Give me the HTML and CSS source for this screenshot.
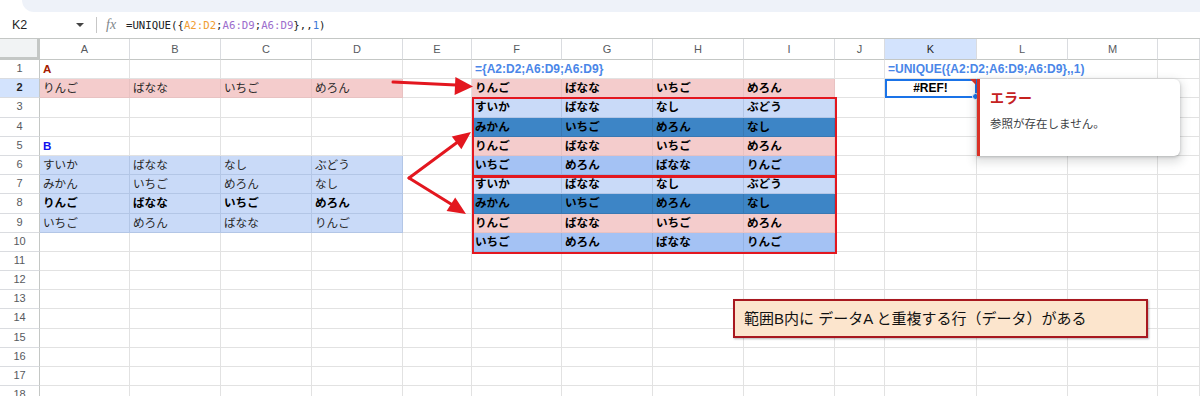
FILE: index.html
```html
<!DOCTYPE html>
<html lang="ja">
<head>
<meta charset="utf-8">
<title>UNIQUE #REF!</title>
<link rel="stylesheet" href="styles.css">
</head>
<body>
<div class="app">
  <div class="topedge"></div>
  <div class="fbar">
    <div class="namebox"><span>K2</span><span class="caret"></span></div>
    <div class="sep"></div>
    <div class="fx">fx</div>
    <div class="formula">=UNIQUE({<span class="o">A2:D2</span>;<span class="p">A6:D9</span>;<span class="p">A6:D9</span>},,<span class="n">1</span>)</div>
  </div>

  <div class="sheet">
    <div class="row hdr">
      <div class="corner"></div><div>A</div><div>B</div><div>C</div><div>D</div><div>E</div><div>F</div><div>G</div><div>H</div><div>I</div><div>J</div><div class="on">K</div><div>L</div><div>M</div><div></div>
    </div>
    <div class="row">
      <div class="rh">1</div><div class="lbl-a">A</div><div></div><div></div><div></div><div></div><div class="fm nr">={A2:D2;A6:D9;A6:D9}</div><div></div><div></div><div></div><div></div><div class="fm nr">=UNIQUE({A2:D2;A6:D9;A6:D9},,1)</div><div class="nr"></div><div></div><div></div>
    </div>
    <div class="row">
      <div class="rh on">2</div><div class="pk">りんご</div><div class="pk">ばなな</div><div class="pk">いちご</div><div class="pk">めろん</div><div></div><div class="pk b">りんご</div><div class="pk b">ばなな</div><div class="pk b">いちご</div><div class="pk b">めろん</div><div></div><div class="sel">#REF!</div><div></div><div></div><div></div>
    </div>
    <div class="row">
      <div class="rh">3</div><div></div><div></div><div></div><div></div><div></div><div class="lb b">すいか</div><div class="lb b">ばなな</div><div class="lb b">なし</div><div class="lb b">ぶどう</div><div></div><div></div><div></div><div></div><div></div>
    </div>
    <div class="row">
      <div class="rh">4</div><div></div><div></div><div></div><div></div><div></div><div class="db b">みかん</div><div class="db b">いちご</div><div class="db b">めろん</div><div class="db b">なし</div><div></div><div></div><div></div><div></div><div></div>
    </div>
    <div class="row">
      <div class="rh">5</div><div class="lbl-b">B</div><div></div><div></div><div></div><div></div><div class="pk b">りんご</div><div class="pk b">ばなな</div><div class="pk b">いちご</div><div class="pk b">めろん</div><div></div><div></div><div></div><div></div><div></div>
    </div>
    <div class="row">
      <div class="rh">6</div><div class="lb">すいか</div><div class="lb">ばなな</div><div class="lb">なし</div><div class="lb">ぶどう</div><div></div><div class="mb b">いちご</div><div class="mb b">めろん</div><div class="mb b">ばなな</div><div class="mb b">りんご</div><div></div><div></div><div></div><div></div><div></div>
    </div>
    <div class="row">
      <div class="rh">7</div><div class="lb">みかん</div><div class="lb">いちご</div><div class="lb">めろん</div><div class="lb">なし</div><div></div><div class="lb b">すいか</div><div class="lb b">ばなな</div><div class="lb b">なし</div><div class="lb b">ぶどう</div><div></div><div></div><div></div><div></div><div></div>
    </div>
    <div class="row">
      <div class="rh">8</div><div class="lb b">りんご</div><div class="lb b">ばなな</div><div class="lb b">いちご</div><div class="lb b">めろん</div><div></div><div class="db b">みかん</div><div class="db b">いちご</div><div class="db b">めろん</div><div class="db b">なし</div><div></div><div></div><div></div><div></div><div></div>
    </div>
    <div class="row">
      <div class="rh">9</div><div class="lb">いちご</div><div class="lb">めろん</div><div class="lb">ばなな</div><div class="lb">りんご</div><div></div><div class="pk b">りんご</div><div class="pk b">ばなな</div><div class="pk b">いちご</div><div class="pk b">めろん</div><div></div><div></div><div></div><div></div><div></div>
    </div>
    <div class="row">
      <div class="rh">10</div><div></div><div></div><div></div><div></div><div></div><div class="mb b">いちご</div><div class="mb b">めろん</div><div class="mb b">ばなな</div><div class="mb b">りんご</div><div></div><div></div><div></div><div></div><div></div>
    </div>
    <div class="row"><div class="rh">11</div><div></div><div></div><div></div><div></div><div></div><div></div><div></div><div></div><div></div><div></div><div></div><div></div><div></div><div></div></div>
    <div class="row"><div class="rh">12</div><div></div><div></div><div></div><div></div><div></div><div></div><div></div><div></div><div></div><div></div><div></div><div></div><div></div><div></div></div>
    <div class="row"><div class="rh">13</div><div></div><div></div><div></div><div></div><div></div><div></div><div></div><div></div><div></div><div></div><div></div><div></div><div></div><div></div></div>
    <div class="row"><div class="rh">14</div><div></div><div></div><div></div><div></div><div></div><div></div><div></div><div></div><div></div><div></div><div></div><div></div><div></div><div></div></div>
    <div class="row"><div class="rh">15</div><div></div><div></div><div></div><div></div><div></div><div></div><div></div><div></div><div></div><div></div><div></div><div></div><div></div><div></div></div>
    <div class="row"><div class="rh">16</div><div></div><div></div><div></div><div></div><div></div><div></div><div></div><div></div><div></div><div></div><div></div><div></div><div></div><div></div></div>
    <div class="row"><div class="rh">17</div><div></div><div></div><div></div><div></div><div></div><div></div><div></div><div></div><div></div><div></div><div></div><div></div><div></div><div></div></div>
    <div class="row"><div class="rh">18</div><div></div><div></div><div></div><div></div><div></div><div></div><div></div><div></div><div></div><div></div><div></div><div></div><div></div><div></div></div>
  </div>

  <div class="rbox rb1"></div>
  <div class="rbox rb2"></div>

  <svg class="arrows" width="1200" height="396" viewBox="0 0 1200 396">
    <g stroke="#e3171f" stroke-width="3" fill="none" stroke-linecap="round">
      <line x1="393" y1="82" x2="456" y2="85"/>
      <line x1="409" y1="178" x2="457" y2="142.5"/>
      <line x1="409" y1="178" x2="451" y2="204"/>
    </g>
    <g fill="#e3171f">
      <polygon points="473,86.5 455.4,77 454.6,95"/>
      <polygon points="471,132 461.4,149.2 451.8,136.4"/>
      <polygon points="466,214 446.6,211 455.2,197.6"/>
    </g>
  </svg>

  <div class="tip">
    <div class="tip-title">エラー</div>
    <div class="tip-msg">参照が存在しません。</div>
  </div>

  <div class="note">範囲B内に データA と重複する行（データ）がある</div>
</div>
</body>
</html>
```

FILE: styles.css
```css
html, body {
  margin: 0;
  padding: 0;
  background: #fff;
}

.app {
  position: relative;
  width: 1200px;
  height: 396px;
  overflow: hidden;
  background: #fff;
  font-family: "Liberation Sans", "Noto Sans CJK JP", sans-serif;
}

.topedge {
  height: 12px;
  margin-left: 22px;
  background: #eef2f9;
  border-bottom-left-radius: 12px;
}

/* formula bar */
.fbar {
  height: 26px;
  display: flex;
  align-items: center;
}

.namebox {
  width: 96px;
  box-sizing: border-box;
  padding: 0 12px 0 12px;
  display: flex;
  align-items: center;
  justify-content: space-between;
  font-size: 12.5px;
  color: #1f1f1f;
}

.caret {
  width: 0;
  height: 0;
  border-left: 4px solid transparent;
  border-right: 4px solid transparent;
  border-top: 4px solid #444;
}

.sep {
  width: 1px;
  height: 16px;
  background: #c7c7c7;
}

.fx {
  width: 20px;
  margin-left: 9px;
  font-family: "Liberation Serif", serif;
  font-style: italic;
  font-size: 14px;
  color: #80868b;
}

.formula {
  font-family: "DejaVu Sans Mono", monospace;
  font-size: 10.7px;
  color: #202124;
  white-space: nowrap;
}

.formula .o { color: #f09d32; }
.formula .p { color: #9b6dcc; }
.formula .n { color: #3c78d8; }

/* sheet grid */
.row {
  display: grid;
  grid-template-columns: 40px 90px 91px 91px 91px 69px 90px 91px 91px 91px 50px 92px 91px 90px 1fr;
  height: 19.2px;
}

.row > div {
  box-sizing: border-box;
  border-right: 1px solid #e2e2e2;
  border-bottom: 1px solid #e2e2e2;
  padding: 0 3px;
  font-size: 11.6px;
  line-height: 18px;
  white-space: nowrap;
  color: #262626;
}

.row.hdr {
  height: 22px;
  border-top: 1px solid #c4c7c5;
  box-sizing: border-box;
}

.row.hdr > div {
  text-align: center;
  font-size: 11px;
  line-height: 20px;
  color: #575a5e;
  border-bottom: 1px solid #c4c7c5;
  border-right-color: #dadce0;
}

.row.hdr > .corner {
  background: #f1f3f4;
  border-right: 3px solid #c4c7c5;
  border-bottom: 3px solid #c4c7c5;
}

.row.hdr > .on {
  background: #d3e3fd;
  color: #1f1f1f;
}

.row > .rh {
  padding: 0;
  text-align: center;
  font-size: 11px;
  line-height: 17px;
  color: #575a5e;
  border-right: 1px solid #c4c7c5;
  border-bottom-color: #dadce0;
}

.row > .rh.on {
  background: #d3e3fd;
  font-weight: bold;
  color: #1f1f1f;
}

.row > .nr {
  border-right-color: transparent;
}

.row > .lbl-a {
  color: #a61c00;
  font-weight: bold;
  font-family: "Liberation Sans", sans-serif;
}

.row > .lbl-b {
  color: #1010ee;
  font-weight: bold;
  font-family: "Liberation Sans", sans-serif;
}

.row > .fm {
  color: #4a86e8;
  font-weight: bold;
  font-size: 12px;
  font-family: "Liberation Sans", sans-serif;
}

.row > .pk {
  background: #f4cccc;
  border-color: #e8c2c2;
}

.row > .lb {
  background: #c9daf8;
  border-color: #b3c6e6;
}

.row > .db {
  background: #3d85c6;
  border-color: #3878b3;
}

.row > .mb {
  background: #a4c2f4;
  border-color: #95b3e3;
}

.row > .b {
  font-weight: bold;
  color: #000;
}

.row > .sel {
  position: relative;
  text-align: center;
  font-weight: bold;
  color: #000;
  font-size: 12px;
  outline: 2px solid #1a73e8;
  outline-offset: -2px;
}

.row > .sel::before {
  content: "";
  position: absolute;
  top: 0;
  right: 0;
  border-top: 6px solid #d93025;
  border-left: 6px solid transparent;
}

.row > .sel::after {
  content: "";
  position: absolute;
  right: -3px;
  bottom: -3px;
  width: 5px;
  height: 5px;
  border-radius: 50%;
  background: #1a73e8;
  border: 1px solid #fff;
}

/* overlays */
.rbox {
  position: absolute;
  left: 472px;
  width: 365px;
  box-sizing: border-box;
  border: 2px solid #e3171f;
}

.rb1 {
  top: 97px;
  height: 80px;
}

.rb2 {
  top: 176px;
  height: 78px;
}

.arrows {
  position: absolute;
  left: 0;
  top: 0;
  pointer-events: none;
}

.tip {
  position: absolute;
  left: 977px;
  top: 79px;
  width: 203px;
  height: 77px;
  box-sizing: border-box;
  background: #fff;
  border-left: 3px solid #d93025;
  border-radius: 0 6px 6px 0;
  box-shadow: 0 1px 3px rgba(60, 64, 67, 0.3), 0 4px 8px 3px rgba(60, 64, 67, 0.15);
  padding: 10px 10px 0 10px;
}

.tip-title {
  font-size: 14px;
  line-height: 18px;
  font-weight: bold;
  color: #c5221f;
}

.tip-msg {
  margin-top: 9px;
  font-size: 11.5px;
  line-height: 16px;
  color: #3c4043;
}

.note {
  position: absolute;
  left: 733px;
  top: 299px;
  width: 415px;
  height: 39px;
  box-sizing: border-box;
  border: 2px solid #a8181f;
  background: #fce5cd;
  box-shadow: 1px 1px 2px rgba(0, 0, 0, 0.3);
  padding-left: 9px;
  font-size: 15px;
  line-height: 35px;
  color: #111;
  white-space: nowrap;
}
```
